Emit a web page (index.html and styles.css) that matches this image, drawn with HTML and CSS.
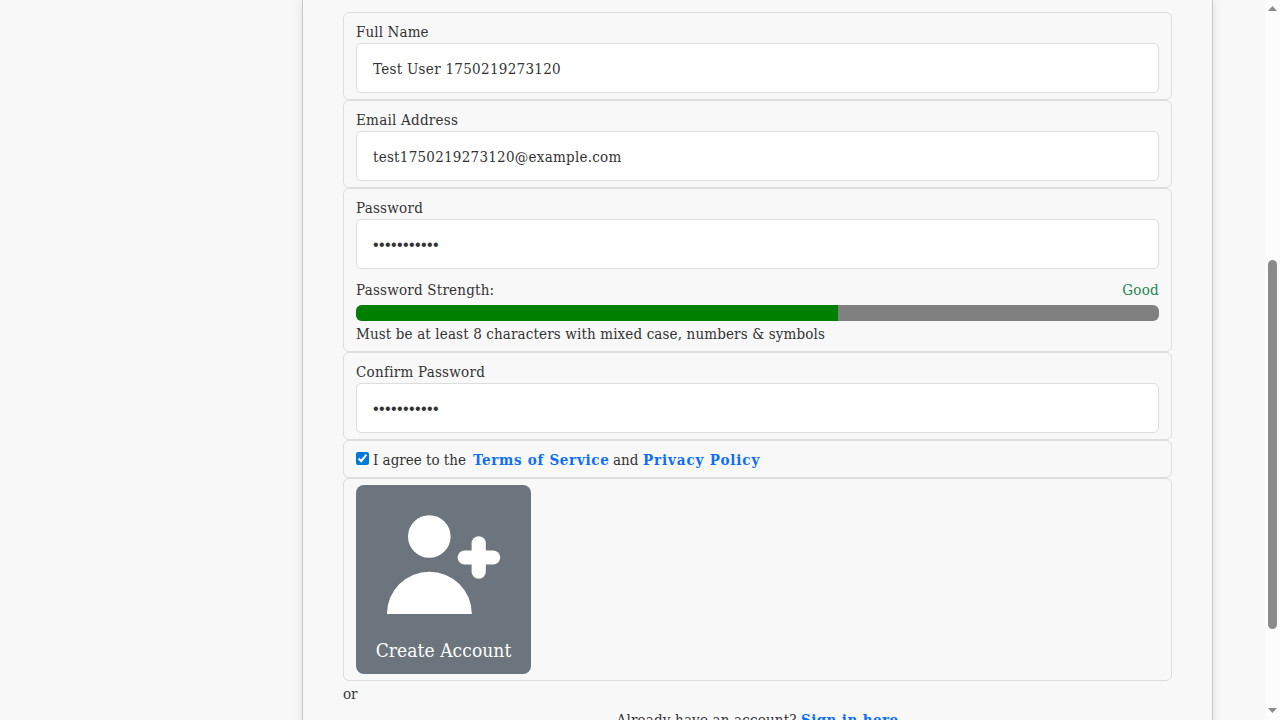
FILE: index.html
```html
<!DOCTYPE html>
<html lang="en">
<head>
<meta charset="utf-8">
<title>Create Account</title>
<link rel="stylesheet" href="styles.css">
</head>
<body>
<div class="page">
  <main class="card">
    <form>
      <div class="group">
        <label class="line" for="name"><span class="t-name">Full Name</span></label>
        <input id="name" class="field f-name" type="text" value="Test User 1750219273120">
      </div>
      <div class="group">
        <label class="line" for="email"><span class="t-email">Email Address</span></label>
        <input id="email" class="field f-email" type="email" value="test1750219273120@example.com">
      </div>
      <div class="group">
        <label class="line" for="pw"><span class="t-pw">Password</span></label>
        <input id="pw" class="field secret" type="password" value="Abcdef123!@">
        <div class="strength"><span class="t-strength">Password Strength:</span><span class="good">Good</span></div>
        <div class="meter"><div class="meter-fill" style="width:60%"></div></div>
        <div class="line"><span class="t-hint">Must be at least 8 characters with mixed case, numbers &amp; symbols</span></div>
      </div>
      <div class="group">
        <label class="line" for="pw2"><span class="t-confirm">Confirm Password</span></label>
        <input id="pw2" class="field secret" type="password" value="Abcdef123!@">
      </div>
      <div class="group agree">
        <input class="check" type="checkbox" checked>
        <span class="t-agree">I agree to the</span>
        <a class="t-terms">Terms of Service</a>
        <span class="t-and">and</span>
        <a class="t-privacy">Privacy Policy</a>
      </div>
      <div class="group">
        <button class="create" type="button">
          <svg class="user-plus" viewBox="0 0 135 144" fill="#fff">
            <circle cx="53.3" cy="45.5" r="21.3"/>
            <path d="M11 123V122.500A42.400 41.800 0 0 1 95.800 122.500V123Z"/>
            <rect x="81.600" y="59.400" width="42.600" height="14.200" rx="7.100"/>
            <rect x="95.600" y="45.200" width="14.200" height="42.600" rx="7.100"/>
          </svg>
          <span class="t-create">Create Account</span>
        </button>
      </div>
    </form>
    <div class="line">or</div>
    <div class="signin"><span class="t-already">Already have an account?</span> <a class="t-signin">Sign in here</a></div>
  </main>
  <div class="scrollbar">
    <svg width="9" height="5" viewBox="0 0 9 5" fill="#8b8b8b"><path d="M4.500 0L9 5H0Z"/></svg>
    <div class="thumb"></div>
    <svg class="down" width="9" height="5" viewBox="0 0 9 5" fill="#8b8b8b"><path d="M0 0H9L4.500 5Z"/></svg>
  </div>
</div>
</body>
</html>
```
FILE: styles.css
```css
* { box-sizing: border-box; }
body {
  margin: 0;
  background: #f8f8f8;
  color: #333;
  font: 15px/24px "DejaVu Serif Condensed", "DejaVu Serif", serif;
  font-stretch: condensed;
}
.page { display: flex; height: 720px; overflow: hidden; }
.card {
  width: 911px;
  height: 760px;
  flex: none;
  margin-left: 302px;
  padding: 12px 40px 0;
  border: solid #c8c8c8;
  border-width: 0 1px;
  box-shadow: 0 0 10px rgba(0, 0, 0, .1);
}
.group { padding: 6px 12px; border: 1px solid #ddd; border-radius: 6px; }
.line { display: block; height: 24px; padding-top: 1px; white-space: nowrap; }
.field {
  display: block;
  width: 100%;
  height: 50px;
  padding: 2px 16px 0;
  border: 1px solid #ddd;
  border-radius: 5px;
  background: #fff;
  color: #333;
  font: inherit;
}
.f-name { letter-spacing: .3px; }
.f-email { letter-spacing: .26px; }
.secret { font: 16px "Liberation Sans", sans-serif; letter-spacing: .4px; }
.t-name { letter-spacing: .12px; }
.t-email, .t-pw, .t-confirm { letter-spacing: .25px; }
.t-strength { letter-spacing: .22px; }
.t-hint { letter-spacing: .14px; }
.strength { display: flex; justify-content: space-between; height: 24px; margin-top: 8px; padding-top: 1px; }
.good { color: #198754; letter-spacing: .25px; }
.meter { height: 16px; margin-top: 4px; overflow: hidden; border-radius: 6px; background: gray; }
.meter-fill { height: 100%; background: green; }
.agree { display: flex; align-items: center; height: 38px; padding-top: 8px; }
.check { width: 13px; height: 13px; margin: 0 4px 3px 0; accent-color: #0078d7; }
a { color: #0d6efd; font-weight: bold; }
.agree span, .agree a { white-space: nowrap; }
.t-agree { width: 100px; }
.t-terms { width: 140px; letter-spacing: .7px; }
.t-and { width: 30px; }
.t-privacy { letter-spacing: .88px; }
.create {
  display: flex;
  flex-direction: column;
  align-items: center;
  width: 175px;
  height: 189px;
  padding: 6px 20px 9px;
  border: 0;
  border-radius: 8px;
  background: #6c757d;
  color: #fff;
  font: inherit;
  font-size: 19px;
  line-height: 30px;
  letter-spacing: .08px;
  white-space: nowrap;
}
.user-plus { width: 135px; height: 144px; }
.signin { margin-top: 3px; text-align: center; }
.t-already { letter-spacing: .17px; }
.t-signin { letter-spacing: .4px; }
.scrollbar {
  display: flex;
  flex-direction: column;
  align-items: center;
  width: 15px;
  height: 720px;
  margin-left: auto;
  padding: 6px 0 7px;
  background: #fcfcfc;
}
.thumb { width: 9px; height: 369px; margin-top: 249px; border-radius: 5px; background: #8b8b8b; }
.down { margin-top: auto; }
```
